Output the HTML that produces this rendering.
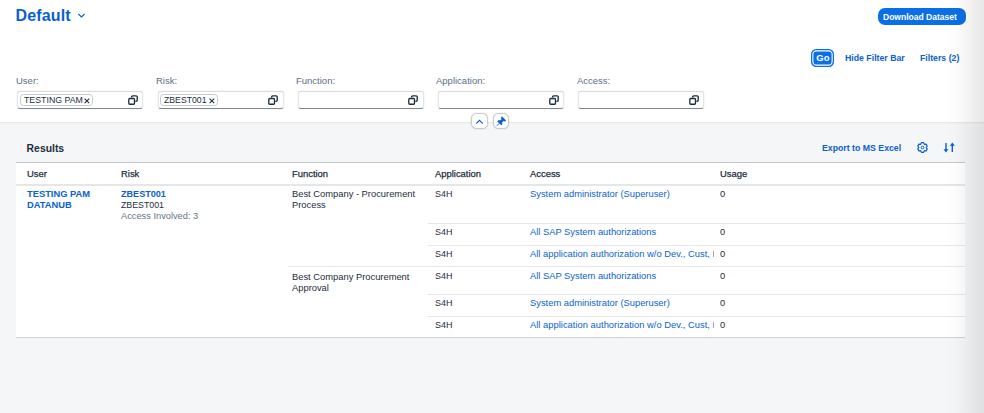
<!DOCTYPE html>
<html><head><meta charset="utf-8"><title>Results</title>
<style>
*{box-sizing:border-box;margin:0;padding:0}
html,body{width:984px;height:413px;overflow:hidden}
body{background:#f5f6f7;font-family:"Liberation Sans",Arial,sans-serif;color:#1d2d3e;position:relative;font-size:10px}
.abs{position:absolute;white-space:nowrap}
.sx{display:inline-block;transform-origin:0 50%}
#hdr{left:0;top:0;width:984px;height:121.6px;background:#fff;box-shadow:0 0 2px rgba(0,0,0,.18)}
#title{left:15.5px;top:4.5px;font-size:16px;font-weight:bold;color:#0a60cf;line-height:22px;letter-spacing:.15px}
#dl{left:878px;top:7.5px;width:87.5px;height:17.5px;border-radius:7px;background:#0a6fe6;color:#fff;font-weight:bold;font-size:9.5px;line-height:17.5px}
#dl span{position:absolute;left:5.1px;top:0;transform:scaleX(.897)}
#go{left:811.3px;top:49px;width:22.7px;height:17.6px;border-radius:5.5px;background:#0a6fe6;color:#fff;font-weight:bold;font-size:9.5px;line-height:17.6px;box-shadow:inset 0 0 0 1.3px #0a6fe6,inset 0 0 0 2.4px #fff}
#go span{position:absolute;left:5px;top:0;transform:scaleX(1)}
.lnk{color:#0a60cf;font-weight:bold;font-size:9.8px;line-height:12px}
.lnk .sx{transform:scaleX(.892)}
.lbl{top:75px;font-size:9.5px;color:#5b6f85;line-height:12px}
.inp{top:91px;width:126.3px;height:17.5px;background:#fff;border:1px solid #e3e6e8;border-top-color:#d9dcdf;border-bottom:1px solid #80868c;border-radius:3px;box-shadow:0 0 1px rgba(85,107,129,.35)}
.tok{left:1.5px;top:2px;height:12px;border:1px solid #c3c9cf;border-radius:3.5px;font-size:9.8px;line-height:10.3px;color:#1d2d3e;background:#fff}
.tok .sx{position:absolute;left:3.1px;top:0;transform:scaleX(.897)}
.tok svg{position:absolute;right:1.9px;top:2.9px}
.vh{right:4.6px;top:3px;width:10px;height:10px}
.rb{top:113.4px;height:16px;border-radius:5.5px;background:#fff;border:1px solid #c6cace;box-shadow:0 0 1.5px rgba(0,0,0,.18)}
#res{left:26.6px;top:141.5px;font-size:10.4px;font-weight:bold;color:#1d2d3e;line-height:13px}
#tbl{left:15.6px;top:162px;width:949px;height:175.8px;background:#fff;border-top:1px solid #c3c7cb;border-bottom:1.5px solid #ced1d4}
.th{top:167.8px;font-size:9.5px;transform:scaleX(.99);transform-origin:0 0;color:#1d2d3e;line-height:12px;-webkit-text-stroke:.25px #1d2d3e}
.td{font-size:9.5px;color:#1d2d3e;line-height:12px;transform:scaleX(.984);transform-origin:0 0;margin-top:-.1px}
.a{color:#0a62d0}
.b{font-weight:bold;color:#0a60cf}
.hl{height:1px;background:#e6e7e8}
#fade{right:0;top:0;width:38px;height:413px;background:linear-gradient(to right,rgba(0,0,0,0) 0,rgba(0,0,0,.012) 25%,rgba(0,0,0,.035) 48%,rgba(0,0,0,.065) 75%,rgba(0,0,0,.09) 100%)}
</style></head><body>
<div class="abs" id="hdr"></div>
<div class="abs" id="title">Default</div>
<svg class="abs" style="left:76.8px;top:11.6px" width="9" height="7.2" viewBox="0 0 10 8"><path d="M1.5 2.2 L5 5.5 L8.5 2.2" fill="none" stroke="#0a60cf" stroke-width="1.3"/></svg>
<div class="abs" id="dl"><span class="sx">Download Dataset</span></div>
<div class="abs" id="go"><span class="sx">Go</span></div>
<div class="abs lnk" style="left:844.8px;top:52.2px"><span class="sx">Hide Filter Bar</span></div>
<div class="abs lnk" style="left:919.8px;top:52.2px"><span class="sx">Filters (2)</span></div>

<div class="abs lbl" style="left:16px">User:</div>
<div class="abs lbl" style="left:156px">Risk:</div>
<div class="abs lbl" style="left:296px">Function:</div>
<div class="abs lbl" style="left:436px">Application:</div>
<div class="abs lbl" style="left:577px">Access:</div>

<div class="abs inp" style="left:17.2px"><div class="abs tok" style="width:73.5px"><span class="sx">TESTING PAM</span><svg width="6" height="6" viewBox="0 0 6 6"><path d="M.6 .6L5.2 5.2M5.2 .6L.6 5.2" stroke="#1d2d3e" stroke-width="1.05"/></svg></div><svg class="abs vh" viewBox="0 0 10 10"><path d="M3.6 2.6V1.9a1.1 1.1 0 0 1 1.1-1.1h3.4a1.1 1.1 0 0 1 1.1 1.1v3.4a1.1 1.1 0 0 1-1.1 1.1H7.4" fill="none" stroke="#1d2d3e" stroke-width="1.35"/><rect x=".8" y="3.5" width="5.7" height="5.7" rx=".9" fill="none" stroke="#1d2d3e" stroke-width="1.35"/></svg></div>
<div class="abs inp" style="left:157.5px"><div class="abs tok" style="width:57.5px;left:1.8px"><span class="sx" style="transform:scaleX(.887);left:2.8px">ZBEST001</span><svg width="6" height="6" viewBox="0 0 6 6"><path d="M.6 .6L5.2 5.2M5.2 .6L.6 5.2" stroke="#1d2d3e" stroke-width="1.05"/></svg></div><svg class="abs vh" viewBox="0 0 10 10"><path d="M3.6 2.6V1.9a1.1 1.1 0 0 1 1.1-1.1h3.4a1.1 1.1 0 0 1 1.1 1.1v3.4a1.1 1.1 0 0 1-1.1 1.1H7.4" fill="none" stroke="#1d2d3e" stroke-width="1.35"/><rect x=".8" y="3.5" width="5.7" height="5.7" rx=".9" fill="none" stroke="#1d2d3e" stroke-width="1.35"/></svg></div>
<div class="abs inp" style="left:297.7px"><svg class="abs vh" viewBox="0 0 10 10"><path d="M3.6 2.6V1.9a1.1 1.1 0 0 1 1.1-1.1h3.4a1.1 1.1 0 0 1 1.1 1.1v3.4a1.1 1.1 0 0 1-1.1 1.1H7.4" fill="none" stroke="#1d2d3e" stroke-width="1.35"/><rect x=".8" y="3.5" width="5.7" height="5.7" rx=".9" fill="none" stroke="#1d2d3e" stroke-width="1.35"/></svg></div>
<div class="abs inp" style="left:438px"><svg class="abs vh" viewBox="0 0 10 10"><path d="M3.6 2.6V1.9a1.1 1.1 0 0 1 1.1-1.1h3.4a1.1 1.1 0 0 1 1.1 1.1v3.4a1.1 1.1 0 0 1-1.1 1.1H7.4" fill="none" stroke="#1d2d3e" stroke-width="1.35"/><rect x=".8" y="3.5" width="5.7" height="5.7" rx=".9" fill="none" stroke="#1d2d3e" stroke-width="1.35"/></svg></div>
<div class="abs inp" style="left:578.2px"><svg class="abs vh" viewBox="0 0 10 10"><path d="M3.6 2.6V1.9a1.1 1.1 0 0 1 1.1-1.1h3.4a1.1 1.1 0 0 1 1.1 1.1v3.4a1.1 1.1 0 0 1-1.1 1.1H7.4" fill="none" stroke="#1d2d3e" stroke-width="1.35"/><rect x=".8" y="3.5" width="5.7" height="5.7" rx=".9" fill="none" stroke="#1d2d3e" stroke-width="1.35"/></svg></div>

<div class="abs rb" style="left:471.2px;width:16.6px"><svg class="abs" style="left:3.3px;top:3.2px" width="9" height="8" viewBox="0 0 9 8"><path d="M1.2 5.6 L4.5 2.4 L7.8 5.6" fill="none" stroke="#0a60cf" stroke-width="1.2"/></svg></div>
<div class="abs rb" style="left:493px;width:16px"><svg class="abs" style="left:1.7px;top:1.5px" width="10.6" height="10.6" viewBox="0 0 11 11"><path d="M6.2 0.8 L10.2 4.8 L9 5.2 L7.6 5 L6 6.6 L6.2 8.6 L5.4 9.2 L1.8 5.6 L2.4 4.8 L4.4 5 L6 3.4 L5.8 2 Z M3.4 7.6 L0.8 10.2" fill="#0a60cf" stroke="#0a60cf" stroke-width="0.9"/></svg></div>

<div class="abs" id="res">Results</div>
<div class="abs lnk" style="left:821.8px;top:142px"><span class="sx">Export to MS Excel</span></div>
<svg class="abs" style="left:917px;top:142px" width="11" height="11" viewBox="0 0 11 11"><path d="M4.40 0.73 L6.60 0.73 L7.35 2.30 L9.08 2.16 L10.19 4.07 L9.20 5.50 L10.19 6.93 L9.08 8.84 L7.35 8.70 L6.60 10.27 L4.40 10.27 L3.65 8.70 L1.92 8.84 L0.81 6.93 L1.80 5.50 L0.81 4.07 L1.92 2.16 L3.65 2.30Z" fill="none" stroke="#0a60cf" stroke-width="1.25" stroke-linejoin="round"/><circle cx="5.5" cy="5.5" r="1.35" fill="none" stroke="#0a60cf" stroke-width="1"/></svg>
<svg class="abs" style="left:943px;top:142px" width="13" height="11" viewBox="0 0 13 11"><path d="M3 .9V8.5M9.3 10.1V2.5" fill="none" stroke="#0a60cf" stroke-width="1.4"/><path d="M.5 7.3H5.5L3 10.4ZM6.8 3.7H11.8L9.3 .6Z" fill="#0a60cf"/></svg>

<div class="abs" id="tbl"></div>
<div class="abs th" style="left:26.5px">User</div>
<div class="abs th" style="left:121.3px">Risk</div>
<div class="abs th" style="left:292.3px">Function</div>
<div class="abs th" style="left:435px">Application</div>
<div class="abs th" style="left:529.7px">Access</div>
<div class="abs th" style="left:719.7px">Usage</div>
<div class="abs hl" style="left:15.6px;top:184.1px;width:949px;height:1.5px;background:#e4e6e7"></div>

<div class="abs td b" style="left:26.9px;top:188px;line-height:11px;font-size:9.8px;transform:scaleX(.952)">TESTING PAM<br>DATANUB</div>
<div class="abs td b" style="left:121px;top:188px;line-height:11px;font-size:9.8px;transform:scaleX(.926)">ZBEST001</div>
<div class="abs td" style="left:121px;top:199px;line-height:11px;transform:scaleX(.925)">ZBEST001</div>
<div class="abs td" style="left:121px;top:210px;line-height:11px;color:#62758a;transform:scaleX(.975)">Access Involved: 3</div>
<div class="abs td" style="left:292.3px;top:188px;line-height:11px">Best Company - Procurement<br>Process</div>
<div class="abs td" style="left:292.3px;top:270.7px;line-height:11px">Best Company Procurement<br>Approval</div>

<div class="abs td" style="left:435px;top:188px;transform:scaleX(.94)">S4H</div>
<div class="abs td a" style="left:529.7px;top:188px">System administrator (Superuser)</div>
<div class="abs td" style="left:719.7px;top:188px">0</div>
<div class="abs hl" style="left:428px;top:223px;width:536.6px"></div>
<div class="abs td" style="left:435px;top:226px;transform:scaleX(.94)">S4H</div>
<div class="abs td a" style="left:529.7px;top:226px">All SAP System authorizations</div>
<div class="abs td" style="left:719.7px;top:226px">0</div>
<div class="abs hl" style="left:428px;top:245px;width:536.6px"></div>
<div class="abs td" style="left:435px;top:248px;transform:scaleX(.94)">S4H</div>
<div class="abs td a" style="left:529.7px;top:248px;width:187.25px;overflow:hidden;letter-spacing:.02px">All application authorization w/o Dev., Cust, I</div>
<div class="abs td" style="left:719.7px;top:248px">0</div>
<div class="abs hl" style="left:288px;top:266px;width:676.6px"></div>
<div class="abs td" style="left:435px;top:270px;transform:scaleX(.94)">S4H</div>
<div class="abs td a" style="left:529.7px;top:269.6px">All SAP System authorizations</div>
<div class="abs td" style="left:719.7px;top:270px">0</div>
<div class="abs hl" style="left:428px;top:294px;width:536.6px"></div>
<div class="abs td" style="left:435px;top:297px;transform:scaleX(.94)">S4H</div>
<div class="abs td a" style="left:529.7px;top:297px">System administrator (Superuser)</div>
<div class="abs td" style="left:719.7px;top:297px">0</div>
<div class="abs hl" style="left:428px;top:316px;width:536.6px"></div>
<div class="abs td" style="left:435px;top:319px;transform:scaleX(.94)">S4H</div>
<div class="abs td a" style="left:529.7px;top:319px;width:187.25px;overflow:hidden;letter-spacing:.02px">All application authorization w/o Dev., Cust, I</div>
<div class="abs td" style="left:719.7px;top:319px">0</div>

<div class="abs" id="fade"></div>
</body></html>
